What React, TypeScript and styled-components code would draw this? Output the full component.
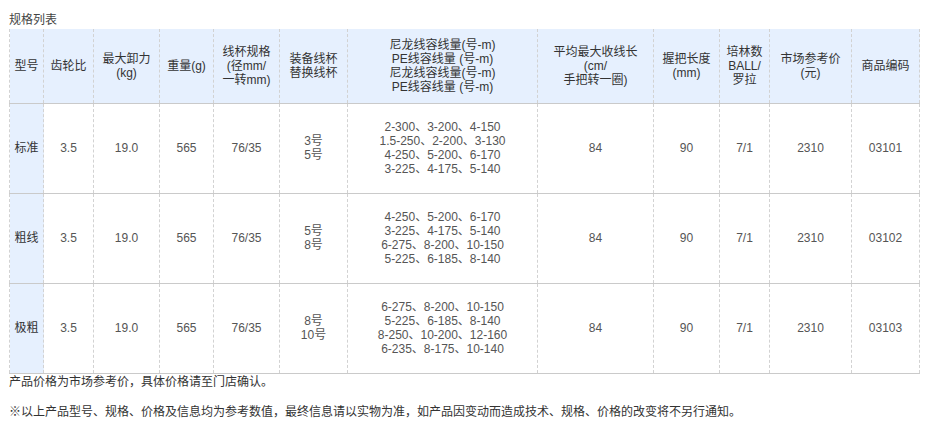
import React from 'react'
import styled, { createGlobalStyle } from 'styled-components'

const GlobalStyle = createGlobalStyle`
  html, body {
    margin: 0;
    padding: 0;
    background: #ffffff;
  }
  body {
    font-family: "Liberation Sans", Arial, "Noto Sans CJK SC", sans-serif;
    font-size: 12px;
    color: #333;
  }
`

const Page = styled.div`
  padding: 12px 0 0 9px;
`

const Title = styled.div`
  font-size: 12px;
  line-height: 16px;
  color: #444;
  height: 17px;
`

const Table = styled.table`
  width: 910px;
  table-layout: fixed;
  border-collapse: collapse;
  font-size: 12px;
  line-height: 14px;
  color: #555;
  text-align: center;
`

const HeadRow = styled.tr`
  height: 74px;
  background: #e6f0fe;
`

const BodyRow = styled.tr`
  height: 90px;
`

const HeadCell = styled.th`
  font-weight: normal;
  color: #333;
  padding: 0 3px;
  border-left: 1px dashed #d2d2d2;
  border-right: 1px dashed #d2d2d2;
  border-bottom: 1px solid #cacaca;
  vertical-align: middle;
`

const Cell = styled.td<{ $name?: boolean }>`
  padding: 0 3px;
  border-left: 1px dashed #d2d2d2;
  border-right: 1px dashed #d2d2d2;
  border-bottom: 1px solid #cacaca;
  vertical-align: middle;
  background: ${(p) => (p.$name ? '#e6f0fe' : 'transparent')};
  color: ${(p) => (p.$name ? '#333' : '#555')};
`

const Note = styled.p`
  margin: 0;
  font-size: 12px;
  line-height: 16px;
  color: #333;
`

const NoteGap = styled.div`
  height: 14px;
`

const widths = [34, 50, 66, 54, 66, 68, 190, 116, 66, 50, 82, 68]

const headers: string[][] = [
  ['型号'],
  ['齿轮比'],
  ['最大卸力', '(kg)'],
  ['重量(g)'],
  ['线杯规格', '(径mm/', '一转mm)'],
  ['装备线杯', '替换线杯'],
  ['尼龙线容线量(号-m)', 'PE线容线量 (号-m)', '尼龙线容线量(号-m)', 'PE线容线量 (号-m)'],
  ['平均最大收线长', '(cm/', '手把转一圈)'],
  ['握把长度', '(mm)'],
  ['培林数', 'BALL/', '罗拉'],
  ['市场参考价', '(元)'],
  ['商品编码'],
]

const rows = [
  {
    name: '标准',
    spools: ['3号', '5号'],
    capacity: ['2-300、3-200、4-150', '1.5-250、2-200、3-130', '4-250、5-200、6-170', '3-225、4-175、5-140'],
    code: '03101',
  },
  {
    name: '粗线',
    spools: ['5号', '8号'],
    capacity: ['4-250、5-200、6-170', '3-225、4-175、5-140', '6-275、8-200、10-150', '5-225、6-185、8-140'],
    code: '03102',
  },
  {
    name: '极粗',
    spools: ['8号', '10号'],
    capacity: ['6-275、8-200、10-150', '5-225、6-185、8-140', '8-250、10-200、12-160', '6-235、8-175、10-140'],
    code: '03103',
  },
]

const Lines = ({ lines }: { lines: string[] }) => (
  <>
    {lines.map((l, i) => (
      <React.Fragment key={i}>
        {i > 0 && <br />}
        {l}
      </React.Fragment>
    ))}
  </>
)

export default function App() {
  return (
    <>
      <GlobalStyle />
      <Page>
        <Title>规格列表</Title>
        <Table>
          <colgroup>
            {widths.map((w, i) => (
              <col key={i} style={{ width: w }} />
            ))}
          </colgroup>
          <thead>
            <HeadRow>
              {headers.map((h, i) => (
                <HeadCell key={i}>
                  <Lines lines={h} />
                </HeadCell>
              ))}
            </HeadRow>
          </thead>
          <tbody>
            {rows.map((r) => (
              <BodyRow key={r.code}>
                <Cell $name>{r.name}</Cell>
                <Cell>3.5</Cell>
                <Cell>19.0</Cell>
                <Cell>565</Cell>
                <Cell>76/35</Cell>
                <Cell>
                  <Lines lines={r.spools} />
                </Cell>
                <Cell>
                  <Lines lines={r.capacity} />
                </Cell>
                <Cell>84</Cell>
                <Cell>90</Cell>
                <Cell>7/1</Cell>
                <Cell>2310</Cell>
                <Cell>{r.code}</Cell>
              </BodyRow>
            ))}
          </tbody>
        </Table>
        <Note>产品价格为市场参考价，具体价格请至门店确认。</Note>
        <NoteGap />
        <Note>※以上产品型号、规格、价格及信息均为参考数值，最终信息请以实物为准，如产品因变动而造成技术、规格、价格的改变将不另行通知。</Note>
      </Page>
    </>
  )
}
